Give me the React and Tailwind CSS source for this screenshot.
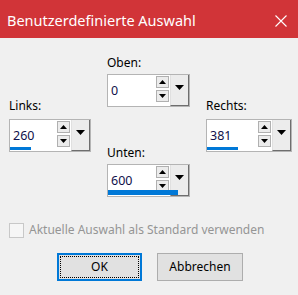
import React from "react";

function Tri({ up, size = "s" }) {
  if (size === "s") {
    return (
      <svg width="7" height="4" viewBox="0 0 7 4">
        {up ? <polygon points="0,4 7,4 3.5,0" fill="#000" /> : <polygon points="0,0 7,0 3.5,4" fill="#000" />}
      </svg>
    );
  }
  return (
    <svg width="9" height="5" viewBox="0 0 9 5">
      <polygon points="0,0 9,0 4.5,5" fill="#000" />
    </svg>
  );
}

function SpinBox({ value, w, bar, barH = 3 }) {
  return (
    <div className="flex h-[33px] border border-[#b4b4b4] bg-white" style={{ width: w }}>
      <div className="relative flex flex-1 items-center pl-[3px] text-[12.5px] text-[#10104a]">
        {value}
        {bar > 0 && (
          <div className="absolute bottom-px left-0 bg-[#0078d7]" style={{ width: bar, height: barH }} />
        )}
      </div>
      <div className="flex flex-col gap-[2px] pt-px pr-px">
        <div className="flex h-[12px] w-[13px] items-center justify-center border border-[#b0b0b0] bg-[#ececec]">
          <Tri up />
        </div>
        <div className="flex h-[12px] w-[13px] items-center justify-center border border-[#b0b0b0] bg-[#ececec]">
          <Tri />
        </div>
      </div>
      <div className="flex w-[19px] items-start justify-center border-r border-b border-r-[#6e6e6e] border-b-[#6e6e6e] border-l border-l-[#e0e0e0] bg-[#ececec] pt-[10px]">
        <Tri size="l" />
      </div>
    </div>
  );
}

export default function App() {
  return (
    <div className="h-[295px] w-[298px] overflow-hidden bg-[#f0f0f0] font-['Noto_Sans',sans-serif] text-black">
      <div className="flex h-[38px] items-center justify-between bg-[#d13438] pl-[7px] pr-[11px] pt-[3px] text-[14.5px] text-white">
        <span>Benutzerdefinierte Auswahl</span>
        <svg width="12" height="12" viewBox="0 0 12 12">
          <path d="M0.5 0.5 L11.5 11.5 M11.5 0.5 L0.5 11.5" stroke="#fff" strokeWidth="1.1" />
        </svg>
      </div>
      <div className="flex pl-[9px] text-[12px] leading-[20px]">
        <div className="flex w-[82px] flex-col pt-[58px]">
          <div className="mb-[3px]">Links:</div>
          <SpinBox value="260" w={82} bar={21} />
        </div>
        <div className="ml-[16px] flex w-[83px] flex-col pt-[15px]">
          <div className="mb-[1px]">Oben:</div>
          <SpinBox value="0" w={83} bar={0} />
          <div className="mb-[1px] mt-[36px]">Unten:</div>
          <SpinBox value="600" w={83} bar={70} barH={5} />
        </div>
        <div className="ml-[16px] flex w-[86px] flex-col pt-[58px]">
          <div className="mb-[3px]">Rechts:</div>
          <SpinBox value="381" w={86} bar={31} />
        </div>
      </div>
      <div className="mt-[23px] flex h-[20px] items-center pl-[9px] text-[12px] leading-[20px]">
        <div className="h-[15px] w-[15px] border border-[#c8c8c8] bg-[#f6f6f6]" />
        <span className="ml-[5px] whitespace-nowrap text-[#959595]">Aktuelle Auswahl als Standard verwenden</span>
      </div>
      <div className="mt-[13px] flex pl-[57px] text-[12px]">
        <div className="flex h-[28px] w-[85px] items-center justify-center border-2 border-[#0078d7] bg-[#e1e1e1] p-px">
          <div className="flex h-full w-full items-center justify-center border border-dotted border-black">OK</div>
        </div>
        <div className="ml-[15px] flex h-[28px] w-[86px] items-center justify-center border border-[#adadad] bg-[#e1e1e1]">
          Abbrechen
        </div>
      </div>
    </div>
  );
}
